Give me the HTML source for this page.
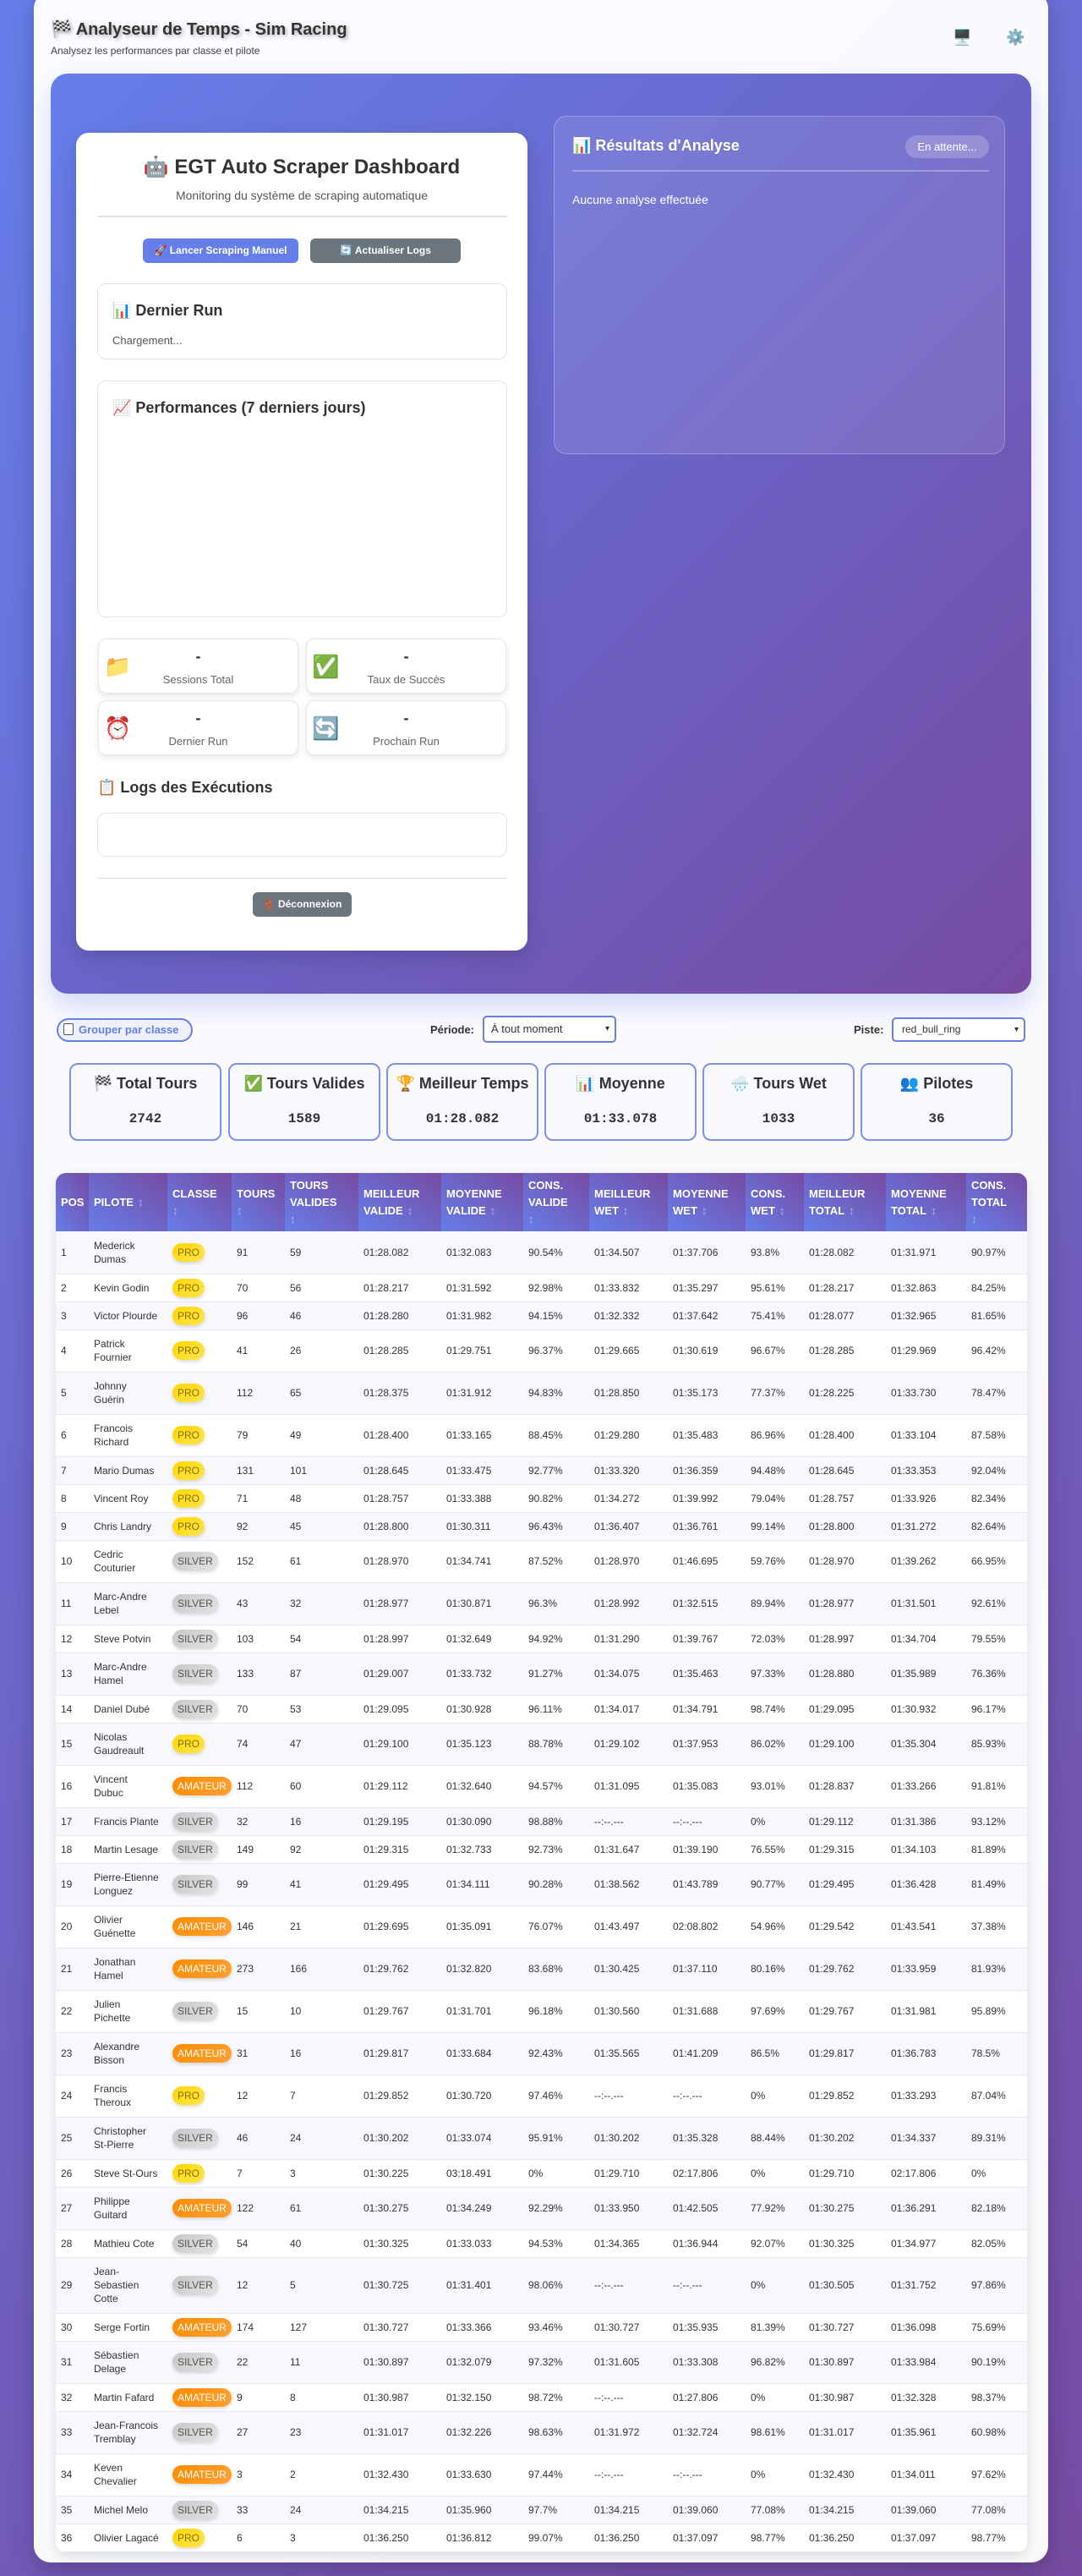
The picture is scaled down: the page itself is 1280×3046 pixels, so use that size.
<!DOCTYPE html>
<html><head><meta charset="utf-8">
<style>
*{box-sizing:border-box;margin:0;padding:0}
html,body{width:1280px;height:3046px;overflow:hidden}
body{font-family:"Liberation Sans","DejaVu Sans",sans-serif;background:linear-gradient(135deg,#667eea 0%,#764ba2 100%);position:relative;color:#333}
.abs{position:absolute}
.wrap{position:absolute;left:40px;top:-10px;width:1200px;height:3040px;background:rgba(255,255,255,0.97);border-radius:20px;box-shadow:0 10px 30px rgba(0,0,0,.2)}
h1{position:absolute;left:60px;top:22px;font-size:20px;font-weight:bold;color:#333;text-shadow:2px 2px 4px rgba(0,0,0,.3)}
.sub{position:absolute;left:60px;top:53px;font-size:12px;color:#444}
.panel{position:absolute;left:60px;top:87px;width:1160px;height:1088px;border-radius:20px;background:linear-gradient(135deg,#667eea 0%,#6a64c8 50%,#764ba2 100%);box-shadow:0 15px 30px rgba(102,126,234,.25)}
.card{position:absolute;left:90px;top:157px;width:534px;height:967px;background:#fff;border-radius:15px;box-shadow:0 8px 25px rgba(0,0,0,.15)}
.rp{position:absolute;left:655px;top:137px;width:534px;height:400px;border-radius:15px;background:rgba(255,255,255,.1);border:1px solid rgba(255,255,255,.25)}
.box{position:absolute;left:115px;width:485px;border:1px solid #e3e3e3;border-radius:10px;background:#fff}
.btn{position:absolute;height:29px;border-radius:6px;color:#fff;font-weight:bold;font-size:12px;line-height:29px;text-align:center}
.sc{position:absolute;width:237px;height:65px;background:#fff;border:1px solid #e6e6e6;border-radius:10px;box-shadow:0 3px 8px rgba(0,0,0,.1)}
.sc .ic{position:absolute;left:6px;top:17px;font-size:26px}
.sc .v{position:absolute;left:0;right:0;top:10px;text-align:center;font-weight:bold;font-size:18px;color:#333}
.sc .l{position:absolute;left:0;right:0;top:40px;text-align:center;font-size:13px;color:#666}
.h3{font-size:18px;font-weight:bold;color:#333}
.st{position:absolute;top:1257px;width:180px;height:92px;background:#f8f9ff;border:2px solid #7f8ff0;border-radius:10px;text-align:center}
.st .t{margin-top:12px;font-size:18px;font-weight:bold;color:#333}
.st .n{margin-top:22px;font-family:"Liberation Mono",monospace;font-size:16px;font-weight:bold;color:#333}
.tw{position:absolute;left:66px;top:1387px;width:1149px;border-radius:12px;overflow:hidden;box-shadow:0 5px 15px rgba(0,0,0,.12);background:#fff}
table{border-collapse:collapse;table-layout:fixed;width:1149px}
th{height:69px;padding:0 6px;text-align:left;vertical-align:middle;color:#fff;font-size:13px;font-weight:bold;line-height:20px;text-transform:uppercase;background:linear-gradient(to top right,#667eea,#764ba2)}
th i{font-style:normal;color:#b9b3d9;font-weight:normal;margin-left:5px}
td{height:33px;padding:0 6px;font-size:12px;line-height:16px;color:#333;border-bottom:1px solid #e6e8ee;white-space:nowrap;vertical-align:middle}
tr.d td{height:50px}
tr.t td{height:66px}
tr:nth-child(even) td{background:#f7f8fd}
.b{display:inline-block;border-radius:12px;padding:3px 6px;margin:-3px 0;font-size:12px;line-height:16px;box-shadow:0 2px 4px rgba(0,0,0,.15)}
.P{background:linear-gradient(135deg,#ffd700,#ffe44d);color:#8a6d00}
.S{background:linear-gradient(135deg,#c8c8c8,#e2e2e2);color:#555}
.A{background:linear-gradient(135deg,#ff8c00,#ffa033);color:#fff}
</style></head><body>
<div class="wrap"></div>
<h1>🏁 Analyseur de Temps - Sim Racing</h1>
<div class="sub">Analysez les performances par classe et pilote</div>
<div class="abs" style="left:1127px;top:34px;font-size:18px">🖥️</div>
<div class="abs" style="left:1190px;top:34px;font-size:18px">⚙️</div>

<div class="panel"></div>
<div class="rp">
  <div class="abs" style="left:21px;top:24px;font-size:18px;font-weight:bold;color:#fff">📊 Résultats d'Analyse</div>
  <div class="abs" style="left:415px;top:22px;width:99px;height:27px;border-radius:14px;background:rgba(255,255,255,.22);color:#fff;font-size:13px;line-height:27px;text-align:center">En attente...</div>
  <div class="abs" style="left:21px;top:63px;width:493px;height:2px;background:rgba(255,255,255,.3)"></div>
  <div class="abs" style="left:21px;top:90px;color:#fff;font-size:14px">Aucune analyse effectuée</div>
</div>

<div class="card"></div>
<div class="abs" style="left:90px;width:534px;top:183px;text-align:center;font-size:24px;font-weight:bold;color:#333">🤖 EGT Auto Scraper Dashboard</div>
<div class="abs" style="left:90px;width:534px;top:223px;text-align:center;font-size:14px;color:#555">Monitoring du système de scraping automatique</div>
<div class="abs" style="left:115px;top:255px;width:485px;height:2px;background:#e0e0e0"></div>
<div class="btn" style="left:169px;top:282px;width:184px;background:#667eea">🚀 Lancer Scraping Manuel</div>
<div class="btn" style="left:367px;top:282px;width:178px;background:#6c757d">🔄 Actualiser Logs</div>
<div class="box" style="top:335px;height:90px"><div class="h3 abs" style="left:17px;top:21px">📊 Dernier Run</div><div class="abs" style="left:17px;top:59px;font-size:13px;color:#555">Chargement...</div></div>
<div class="box" style="top:450px;height:280px"><div class="h3 abs" style="left:17px;top:21px">📈 Performances (7 derniers jours)</div></div>
<div class="sc" style="left:116px;top:755px"><span class="ic">📁</span><div class="v">-</div><div class="l">Sessions Total</div></div>
<div class="sc" style="left:362px;top:755px"><span class="ic">✅</span><div class="v">-</div><div class="l">Taux de Succès</div></div>
<div class="sc" style="left:116px;top:828px"><span class="ic">⏰</span><div class="v">-</div><div class="l">Dernier Run</div></div>
<div class="sc" style="left:362px;top:828px"><span class="ic">🔄</span><div class="v">-</div><div class="l">Prochain Run</div></div>
<div class="h3 abs" style="left:115px;top:921px">📋 Logs des Exécutions</div>
<div class="box" style="top:961px;height:52px"></div>
<div class="abs" style="left:115px;top:1038px;width:485px;height:1px;background:#ddd"></div>
<div class="btn" style="left:299px;top:1055px;width:117px;background:#6c757d">🚪 Déconnexion</div>

<div class="abs" style="left:67px;top:1204px;width:161px;height:28px;border:2px solid #667eea;border-radius:15px;background:#eef0fd;color:#667eea;font-weight:bold;font-size:13px;line-height:24px;padding-left:6px"><span style="display:inline-block;width:12px;height:14px;border:1px solid #555;border-radius:2px;background:#fff;vertical-align:-2px;margin-right:6px"></span>Grouper par classe</div>
<div class="abs" style="left:509px;top:1210px;font-size:13px;font-weight:bold;color:#333">Période:</div>
<div class="abs" style="left:571px;top:1201px;width:158px;height:32px;border:2px solid #667eea;border-radius:5px;background:#fff;font-size:13px;line-height:28px;padding-left:8px">À tout moment<span style="position:absolute;right:6px;font-size:10px">▾</span></div>
<div class="abs" style="left:1010px;top:1210px;font-size:13px;font-weight:bold;color:#333">Piste:</div>
<div class="abs" style="left:1055px;top:1203px;width:158px;height:29px;border:2px solid #667eea;border-radius:5px;background:#fff;font-size:12px;line-height:25px;padding-left:10px">red_bull_ring<span style="position:absolute;right:6px;font-size:10px">▾</span></div>

<div class="st" style="left:82px"><div class="t">🏁 Total Tours</div><div class="n">2742</div></div>
<div class="st" style="left:270px"><div class="t">✅ Tours Valides</div><div class="n">1589</div></div>
<div class="st" style="left:457px"><div class="t">🏆 Meilleur Temps</div><div class="n">01:28.082</div></div>
<div class="st" style="left:644px"><div class="t">📊 Moyenne</div><div class="n">01:33.078</div></div>
<div class="st" style="left:831px"><div class="t">🌧️ Tours Wet</div><div class="n">1033</div></div>
<div class="st" style="left:1018px"><div class="t">👥 Pilotes</div><div class="n">36</div></div>

<div class="tw"><table>
<colgroup><col style="width:39px"><col style="width:93px"><col style="width:76px"><col style="width:63px"><col style="width:87px"><col style="width:98px"><col style="width:97px"><col style="width:78px"><col style="width:93px"><col style="width:92px"><col style="width:69px"><col style="width:97px"><col style="width:95px"><col style="width:72px"></colgroup>
<tr><th>Pos</th><th>Pilote<i>↕</i></th><th>Classe<br><i style="margin:0">↕</i></th><th>Tours<br><i style="margin:0">↕</i></th><th>Tours<br>Valides<br><i style="margin:0">↕</i></th><th>Meilleur<br>Valide<i>↕</i></th><th>Moyenne<br>Valide<i>↕</i></th><th>Cons.<br>Valide<br><i style="margin:0">↕</i></th><th>Meilleur<br>Wet<i>↕</i></th><th>Moyenne<br>Wet<i>↕</i></th><th>Cons.<br>Wet<i>↕</i></th><th>Meilleur<br>Total<i>↕</i></th><th>Moyenne<br>Total<i>↕</i></th><th>Cons.<br>Total<br><i style="margin:0">↕</i></th></tr>
<tr class="d"><td>1</td><td>Mederick<br>Dumas</td><td><span class="b P">PRO</span></td><td>91</td><td>59</td><td>01:28.082</td><td>01:32.083</td><td>90.54%</td><td>01:34.507</td><td>01:37.706</td><td>93.8%</td><td>01:28.082</td><td>01:31.971</td><td>90.97%</td></tr>
<tr><td>2</td><td>Kevin Godin</td><td><span class="b P">PRO</span></td><td>70</td><td>56</td><td>01:28.217</td><td>01:31.592</td><td>92.98%</td><td>01:33.832</td><td>01:35.297</td><td>95.61%</td><td>01:28.217</td><td>01:32.863</td><td>84.25%</td></tr>
<tr><td>3</td><td>Victor Plourde</td><td><span class="b P">PRO</span></td><td>96</td><td>46</td><td>01:28.280</td><td>01:31.982</td><td>94.15%</td><td>01:32.332</td><td>01:37.642</td><td>75.41%</td><td>01:28.077</td><td>01:32.965</td><td>81.65%</td></tr>
<tr class="d"><td>4</td><td>Patrick<br>Fournier</td><td><span class="b P">PRO</span></td><td>41</td><td>26</td><td>01:28.285</td><td>01:29.751</td><td>96.37%</td><td>01:29.665</td><td>01:30.619</td><td>96.67%</td><td>01:28.285</td><td>01:29.969</td><td>96.42%</td></tr>
<tr class="d"><td>5</td><td>Johnny<br>Guérin</td><td><span class="b P">PRO</span></td><td>112</td><td>65</td><td>01:28.375</td><td>01:31.912</td><td>94.83%</td><td>01:28.850</td><td>01:35.173</td><td>77.37%</td><td>01:28.225</td><td>01:33.730</td><td>78.47%</td></tr>
<tr class="d"><td>6</td><td>Francois<br>Richard</td><td><span class="b P">PRO</span></td><td>79</td><td>49</td><td>01:28.400</td><td>01:33.165</td><td>88.45%</td><td>01:29.280</td><td>01:35.483</td><td>86.96%</td><td>01:28.400</td><td>01:33.104</td><td>87.58%</td></tr>
<tr><td>7</td><td>Mario Dumas</td><td><span class="b P">PRO</span></td><td>131</td><td>101</td><td>01:28.645</td><td>01:33.475</td><td>92.77%</td><td>01:33.320</td><td>01:36.359</td><td>94.48%</td><td>01:28.645</td><td>01:33.353</td><td>92.04%</td></tr>
<tr><td>8</td><td>Vincent Roy</td><td><span class="b P">PRO</span></td><td>71</td><td>48</td><td>01:28.757</td><td>01:33.388</td><td>90.82%</td><td>01:34.272</td><td>01:39.992</td><td>79.04%</td><td>01:28.757</td><td>01:33.926</td><td>82.34%</td></tr>
<tr><td>9</td><td>Chris Landry</td><td><span class="b P">PRO</span></td><td>92</td><td>45</td><td>01:28.800</td><td>01:30.311</td><td>96.43%</td><td>01:36.407</td><td>01:36.761</td><td>99.14%</td><td>01:28.800</td><td>01:31.272</td><td>82.64%</td></tr>
<tr class="d"><td>10</td><td>Cedric<br>Couturier</td><td><span class="b S">SILVER</span></td><td>152</td><td>61</td><td>01:28.970</td><td>01:34.741</td><td>87.52%</td><td>01:28.970</td><td>01:46.695</td><td>59.76%</td><td>01:28.970</td><td>01:39.262</td><td>66.95%</td></tr>
<tr class="d"><td>11</td><td>Marc-Andre<br>Lebel</td><td><span class="b S">SILVER</span></td><td>43</td><td>32</td><td>01:28.977</td><td>01:30.871</td><td>96.3%</td><td>01:28.992</td><td>01:32.515</td><td>89.94%</td><td>01:28.977</td><td>01:31.501</td><td>92.61%</td></tr>
<tr><td>12</td><td>Steve Potvin</td><td><span class="b S">SILVER</span></td><td>103</td><td>54</td><td>01:28.997</td><td>01:32.649</td><td>94.92%</td><td>01:31.290</td><td>01:39.767</td><td>72.03%</td><td>01:28.997</td><td>01:34.704</td><td>79.55%</td></tr>
<tr class="d"><td>13</td><td>Marc-Andre<br>Hamel</td><td><span class="b S">SILVER</span></td><td>133</td><td>87</td><td>01:29.007</td><td>01:33.732</td><td>91.27%</td><td>01:34.075</td><td>01:35.463</td><td>97.33%</td><td>01:28.880</td><td>01:35.989</td><td>76.36%</td></tr>
<tr><td>14</td><td>Daniel Dubé</td><td><span class="b S">SILVER</span></td><td>70</td><td>53</td><td>01:29.095</td><td>01:30.928</td><td>96.11%</td><td>01:34.017</td><td>01:34.791</td><td>98.74%</td><td>01:29.095</td><td>01:30.932</td><td>96.17%</td></tr>
<tr class="d"><td>15</td><td>Nicolas<br>Gaudreault</td><td><span class="b P">PRO</span></td><td>74</td><td>47</td><td>01:29.100</td><td>01:35.123</td><td>88.78%</td><td>01:29.102</td><td>01:37.953</td><td>86.02%</td><td>01:29.100</td><td>01:35.304</td><td>85.93%</td></tr>
<tr class="d"><td>16</td><td>Vincent<br>Dubuc</td><td><span class="b A">AMATEUR</span></td><td>112</td><td>60</td><td>01:29.112</td><td>01:32.640</td><td>94.57%</td><td>01:31.095</td><td>01:35.083</td><td>93.01%</td><td>01:28.837</td><td>01:33.266</td><td>91.81%</td></tr>
<tr><td>17</td><td>Francis Plante</td><td><span class="b S">SILVER</span></td><td>32</td><td>16</td><td>01:29.195</td><td>01:30.090</td><td>98.88%</td><td>--:--.---</td><td>--:--.---</td><td>0%</td><td>01:29.112</td><td>01:31.386</td><td>93.12%</td></tr>
<tr><td>18</td><td>Martin Lesage</td><td><span class="b S">SILVER</span></td><td>149</td><td>92</td><td>01:29.315</td><td>01:32.733</td><td>92.73%</td><td>01:31.647</td><td>01:39.190</td><td>76.55%</td><td>01:29.315</td><td>01:34.103</td><td>81.89%</td></tr>
<tr class="d"><td>19</td><td>Pierre-Etienne<br>Longuez</td><td><span class="b S">SILVER</span></td><td>99</td><td>41</td><td>01:29.495</td><td>01:34.111</td><td>90.28%</td><td>01:38.562</td><td>01:43.789</td><td>90.77%</td><td>01:29.495</td><td>01:36.428</td><td>81.49%</td></tr>
<tr class="d"><td>20</td><td>Olivier<br>Guénette</td><td><span class="b A">AMATEUR</span></td><td>146</td><td>21</td><td>01:29.695</td><td>01:35.091</td><td>76.07%</td><td>01:43.497</td><td>02:08.802</td><td>54.96%</td><td>01:29.542</td><td>01:43.541</td><td>37.38%</td></tr>
<tr class="d"><td>21</td><td>Jonathan<br>Hamel</td><td><span class="b A">AMATEUR</span></td><td>273</td><td>166</td><td>01:29.762</td><td>01:32.820</td><td>83.68%</td><td>01:30.425</td><td>01:37.110</td><td>80.16%</td><td>01:29.762</td><td>01:33.959</td><td>81.93%</td></tr>
<tr class="d"><td>22</td><td>Julien<br>Pichette</td><td><span class="b S">SILVER</span></td><td>15</td><td>10</td><td>01:29.767</td><td>01:31.701</td><td>96.18%</td><td>01:30.560</td><td>01:31.688</td><td>97.69%</td><td>01:29.767</td><td>01:31.981</td><td>95.89%</td></tr>
<tr class="d"><td>23</td><td>Alexandre<br>Bisson</td><td><span class="b A">AMATEUR</span></td><td>31</td><td>16</td><td>01:29.817</td><td>01:33.684</td><td>92.43%</td><td>01:35.565</td><td>01:41.209</td><td>86.5%</td><td>01:29.817</td><td>01:36.783</td><td>78.5%</td></tr>
<tr class="d"><td>24</td><td>Francis<br>Theroux</td><td><span class="b P">PRO</span></td><td>12</td><td>7</td><td>01:29.852</td><td>01:30.720</td><td>97.46%</td><td>--:--.---</td><td>--:--.---</td><td>0%</td><td>01:29.852</td><td>01:33.293</td><td>87.04%</td></tr>
<tr class="d"><td>25</td><td>Christopher<br>St-Pierre</td><td><span class="b S">SILVER</span></td><td>46</td><td>24</td><td>01:30.202</td><td>01:33.074</td><td>95.91%</td><td>01:30.202</td><td>01:35.328</td><td>88.44%</td><td>01:30.202</td><td>01:34.337</td><td>89.31%</td></tr>
<tr><td>26</td><td>Steve St-Ours</td><td><span class="b P">PRO</span></td><td>7</td><td>3</td><td>01:30.225</td><td>03:18.491</td><td>0%</td><td>01:29.710</td><td>02:17.806</td><td>0%</td><td>01:29.710</td><td>02:17.806</td><td>0%</td></tr>
<tr class="d"><td>27</td><td>Philippe<br>Guitard</td><td><span class="b A">AMATEUR</span></td><td>122</td><td>61</td><td>01:30.275</td><td>01:34.249</td><td>92.29%</td><td>01:33.950</td><td>01:42.505</td><td>77.92%</td><td>01:30.275</td><td>01:36.291</td><td>82.18%</td></tr>
<tr><td>28</td><td>Mathieu Cote</td><td><span class="b S">SILVER</span></td><td>54</td><td>40</td><td>01:30.325</td><td>01:33.033</td><td>94.53%</td><td>01:34.365</td><td>01:36.944</td><td>92.07%</td><td>01:30.325</td><td>01:34.977</td><td>82.05%</td></tr>
<tr class="t"><td>29</td><td>Jean-<br>Sebastien<br>Cotte</td><td><span class="b S">SILVER</span></td><td>12</td><td>5</td><td>01:30.725</td><td>01:31.401</td><td>98.06%</td><td>--:--.---</td><td>--:--.---</td><td>0%</td><td>01:30.505</td><td>01:31.752</td><td>97.86%</td></tr>
<tr><td>30</td><td>Serge Fortin</td><td><span class="b A">AMATEUR</span></td><td>174</td><td>127</td><td>01:30.727</td><td>01:33.366</td><td>93.46%</td><td>01:30.727</td><td>01:35.935</td><td>81.39%</td><td>01:30.727</td><td>01:36.098</td><td>75.69%</td></tr>
<tr class="d"><td>31</td><td>Sébastien<br>Delage</td><td><span class="b S">SILVER</span></td><td>22</td><td>11</td><td>01:30.897</td><td>01:32.079</td><td>97.32%</td><td>01:31.605</td><td>01:33.308</td><td>96.82%</td><td>01:30.897</td><td>01:33.984</td><td>90.19%</td></tr>
<tr><td>32</td><td>Martin Fafard</td><td><span class="b A">AMATEUR</span></td><td>9</td><td>8</td><td>01:30.987</td><td>01:32.150</td><td>98.72%</td><td>--:--.---</td><td>01:27.806</td><td>0%</td><td>01:30.987</td><td>01:32.328</td><td>98.37%</td></tr>
<tr class="d"><td>33</td><td>Jean-Francois<br>Tremblay</td><td><span class="b S">SILVER</span></td><td>27</td><td>23</td><td>01:31.017</td><td>01:32.226</td><td>98.63%</td><td>01:31.972</td><td>01:32.724</td><td>98.61%</td><td>01:31.017</td><td>01:35.961</td><td>60.98%</td></tr>
<tr class="d"><td>34</td><td>Keven<br>Chevalier</td><td><span class="b A">AMATEUR</span></td><td>3</td><td>2</td><td>01:32.430</td><td>01:33.630</td><td>97.44%</td><td>--:--.---</td><td>--:--.---</td><td>0%</td><td>01:32.430</td><td>01:34.011</td><td>97.62%</td></tr>
<tr><td>35</td><td>Michel Melo</td><td><span class="b S">SILVER</span></td><td>33</td><td>24</td><td>01:34.215</td><td>01:35.960</td><td>97.7%</td><td>01:34.215</td><td>01:39.060</td><td>77.08%</td><td>01:34.215</td><td>01:39.060</td><td>77.08%</td></tr>
<tr><td>36</td><td>Olivier Lagacé</td><td><span class="b P">PRO</span></td><td>6</td><td>3</td><td>01:36.250</td><td>01:36.812</td><td>99.07%</td><td>01:36.250</td><td>01:37.097</td><td>98.77%</td><td>01:36.250</td><td>01:37.097</td><td>98.77%</td></tr>
</table></div>
</body></html>
